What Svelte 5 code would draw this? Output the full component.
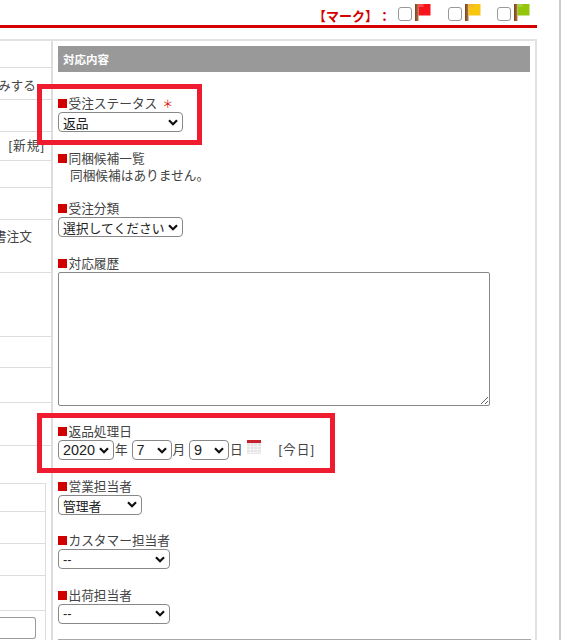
<script>
  const leftRows = [
    { h: 27, text: "" },
    { h: 32, text: "みする", cls: "t-mi" },
    { h: 32, text: "" },
    { h: 29, text: "[新規]", cls: "t-new" },
    { h: 27, text: "" },
    { h: 32, text: "" },
    { h: 53, text: "書注文", cls: "t-sho" },
    { h: 64, text: "" },
    { h: 31, text: "" },
    { h: 35, text: "" },
    { h: 43, text: "" },
  ];

  const staffFields = [
    { label: "営業担当者", value: "管理者", cls: "w84 cjk" },
    { label: "カスタマー担当者", value: "--", cls: "w112" },
    { label: "出荷担当者", value: "--", cls: "w112" },
  ];

  const flags = [
    { id: "a", color: "#f8141c", light: "#fb4a4a" },
    { id: "b", color: "#f7c70f", light: "#f0b82a" },
    { id: "c", color: "#94c60c", light: "#a9cf3a" },
  ];
</script>

<div class="page">
  <header class="topbar">
    <span class="mark">【マーク】：</span>
    {#each flags as f}
      <span class="flag-item">
        <input type="checkbox" class="check" />
        <svg width="16" height="17" viewBox="0 0 16 17">
          <defs>
            <linearGradient id="pole-{f.id}" x1="0" x2="1" y1="0" y2="0">
              <stop offset="0" stop-color="#7a3d18" />
              <stop offset="1" stop-color="#b07a50" />
            </linearGradient>
          </defs>
          <rect x="0" y="0" width="3.500" height="17" fill="url(#pole-{f.id})" />
          <rect x="3.500" y="0" width="12" height="11.500" fill={f.color} />
          <rect x="3.500" y="0" width="5" height="3" fill={f.light} />
        </svg>
      </span>
    {/each}
  </header>

  <div class="columns">
    <aside class="left">
      {#each leftRows as r}
        <div class="row {r.cls ?? ''}" style="height: {r.h}px">
          {#if r.text}
            <span class="row-text">{r.text}</span>
          {/if}
        </div>
      {/each}
      <div class="subtable">
        <div class="subrow h28"></div>
        <div class="subrow h32"></div>
        <div class="subrow h32"></div>
        <div class="subrow h35"></div>
        <div class="subrow last"><span class="fake-input"></span></div>
      </div>
    </aside>

    <main class="panel">
      <h2 class="bar">対応内容</h2>

      <div class="field first">
        <div class="label">受注ステータス<span class="req">＊</span></div>
        <select class="w125 cjk"><option>返品</option></select>
      </div>

      <div class="field">
        <div class="label">同梱候補一覧</div>
        <div class="note">同梱候補はありません。</div>
      </div>

      <div class="field">
        <div class="label">受注分類</div>
        <select class="w125 cjk"><option>選択してください</option></select>
      </div>

      <div class="field">
        <div class="label">対応履歴</div>
        <textarea></textarea>
      </div>

      <div class="field">
        <div class="label">返品処理日</div>
        <div class="date-row">
          <select class="y"><option>2020</option></select><span class="unit">年</span>
          <select class="d"><option>7</option></select><span class="unit">月</span>
          <select class="d"><option>9</option></select><span class="unit">日</span>
          <svg class="cal" width="14" height="14" viewBox="0 0 14 14">
            <rect width="14" height="14" fill="#e4e4e4" />
            <rect width="14" height="3" fill="#c8202c" />
            <path d="M0 6.500h14M0 9.500h14M0 12.500h14M3.500 3v11M7 3v11M10.500 3v11" stroke="#f4f4f4" stroke-width="1" />
          </svg>
          <span class="today">[今日]</span>
        </div>
      </div>

      {#each staffFields as s}
        <div class="field">
          <div class="label">{s.label}</div>
          <select class={s.cls}><option>{s.value}</option></select>
        </div>
      {/each}

      <div class="end-line"></div>
    </main>
  </div>

  <div class="callout one"></div>
  <div class="callout two"></div>
</div>

<style>
  :global(body) {
    margin: 0;
    background: #fff;
    font-family: "Liberation Sans", "Noto Sans CJK JP", sans-serif;
    color: #444;
    font-size: 12.7px;
  }

  .page {
    position: relative;
    width: 559px;
    height: 640px;
    overflow: hidden;
    border-right: 2px solid #ccc;
    box-sizing: content-box;
  }

  .topbar {
    width: 537px;
    height: 25px;
    border-bottom: 3px solid #d40000;
    display: flex;
    justify-content: flex-end;
    align-items: flex-start;
    box-sizing: content-box;
  }

  .mark {
    color: #d40000;
    font-weight: bold;
    font-size: 13px;
    line-height: 16px;
    margin-top: 9px;
    margin-right: 7px;
    text-spacing-trim: space-all;
  }

  .flag-item {
    display: flex;
    align-items: flex-start;
    width: 50px;
    margin-top: 4px;
  }

  .flag-item:nth-of-type(3) {
    width: 49px;
  }

  .flag-item:last-child {
    width: 33px;
    padding-right: 7px;
  }

  .check {
    appearance: none;
    flex: none;
    width: 14px;
    height: 14px;
    margin: 3px 3px 0 0;
    border: 1px solid #999;
    border-radius: 3px;
    background: #fff;
    box-sizing: border-box;
  }

  .columns {
    display: flex;
    margin-top: 11px;
    width: 537px;
    border-top: 2px solid #e2e2e2;
  }

  .left {
    width: 51px;
    flex: none;
    border-right: 2px solid #ddd;
  }

  .row {
    display: flex;
    align-items: center;
    justify-content: flex-end;
    overflow: hidden;
    border-bottom: 1px solid #ddd;
    box-sizing: border-box;
  }

  .row-text {
    flex: none;
    white-space: nowrap;
    line-height: 16px;
  }

  .t-mi {
    padding: 4px 15px 0 0;
  }

  .t-new {
    padding-right: 6px;
    letter-spacing: 1px;
  }

  .t-sho {
    align-items: flex-start;
    padding: 9px 19px 0 0;
  }

  .subtable {
    margin-top: 37px;
    width: 46px;
    border: 1px solid #ddd;
    border-left: none;
    box-sizing: border-box;
  }

  .subrow {
    border-bottom: 1px solid #ddd;
    box-sizing: border-box;
  }

  .h28 { height: 28px; }
  .h32 { height: 32px; }
  .h35 { height: 35px; }

  .subrow.last {
    height: 60px;
    border-bottom: none;
    padding-top: 6px;
  }

  .fake-input {
    display: block;
    width: 36px;
    height: 22px;
    border: 1px solid #999;
    border-left: none;
    border-radius: 0 3px 3px 0;
    box-sizing: border-box;
  }

  .panel {
    flex: 1;
    padding: 5px 5px 0 5px;
    border-right: 2px solid #e2e2e2;
    min-width: 0;
  }

  .bar {
    margin: 0;
    height: 26px;
    background: #999;
    color: #fff;
    font-size: 11.500px;
    font-weight: bold;
    line-height: 28px;
    padding-left: 5px;
  }

  .field {
    margin-top: 17.5px;
  }

  .field.first {
    margin-top: 23px;
  }

  .label {
    line-height: 19px;
    height: 17px;
    white-space: nowrap;
  }

  .label::before {
    content: "";
    display: inline-block;
    width: 9px;
    height: 9px;
    margin-right: 1.5px;
    background: #d00000;
  }

  .req {
    color: #e01010;
    margin-left: 5px;
    font-size: 11px;
  }

  .note {
    padding-left: 12px;
    height: 16px;
    line-height: 18px;
  }

  select {
    appearance: none;
    display: block;
    height: 20px;
    margin: 0;
    padding: 0 0 0 4px;
    border: 1px solid #888;
    border-radius: 4px;
    font-family: inherit;
    font-size: 12.8px;
    color: #222;
    box-sizing: border-box;
    background: #fff url("data:image/svg+xml,%3Csvg xmlns='http://www.w3.org/2000/svg' width='10' height='7' viewBox='0 0 10 7'%3E%3Cpath d='M1 1.200l4 4 4-4' fill='none' stroke='%23111' stroke-width='2.200'/%3E%3C/svg%3E") no-repeat right 4px center;
  }

  select.cjk {
    padding-top: 3px;
  }

  .w125 { width: 125px; }
  .w84 { width: 84px; }
  .w112 { width: 112px; }

  textarea {
    display: block;
    width: 432px;
    height: 134px;
    margin: 0;
    padding: 2px;
    border: 1px solid #888;
    border-radius: 2px;
    box-sizing: border-box;
    background: #fff;
    font-family: inherit;
  }

  .date-row {
    display: flex;
    align-items: center;
    height: 20px;
  }

  .date-row select {
    flex: none;
  }

  .date-row .y { width: 56px; font-size: 14.4px; }
  .date-row .d { width: 40px; font-size: 14.4px; }

  .unit {
    width: 17.5px;
    line-height: 20px;
    padding-left: 1px;
    box-sizing: border-box;
  }

  .cal {
    flex: none;
    align-self: flex-start;
  }

  .today {
    margin: 0 0 3px 18px;
    white-space: nowrap;
    letter-spacing: 1px;
  }

  .end-line {
    margin-top: 15.5px;
    width: 473px;
    height: 1px;
    background: #aaa;
  }

  .callout {
    position: absolute;
    border: 5px solid #ee1c2e;
    box-sizing: border-box;
    pointer-events: none;
  }

  .callout.one {
    left: 37px;
    top: 84px;
    width: 165px;
    height: 61px;
  }

  .callout.two {
    left: 37px;
    top: 413px;
    width: 298px;
    height: 60px;
  }
</style>
